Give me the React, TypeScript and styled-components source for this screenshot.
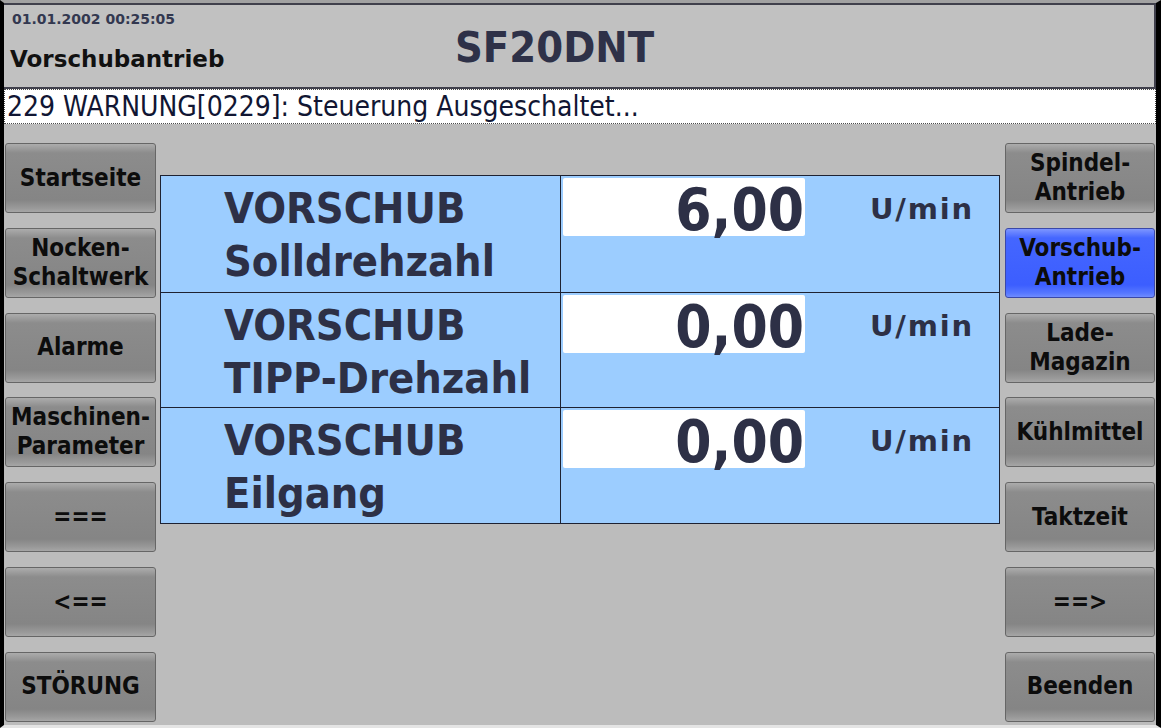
import React from "react";
import styled, { createGlobalStyle } from "styled-components";

const GlobalStyle = createGlobalStyle`
  * { box-sizing: border-box; }
  html, body { margin: 0; padding: 0; background: #bcbcbc; }
  body { font-family: "DejaVu Sans Condensed", "DejaVu Sans", sans-serif; }
`;

const Screen = styled.div`
  width: 1161px;
  height: 728px;
  display: flex;
  flex-direction: column;
  background: #bcbcbc;
  border-left: 4px solid #000;
  border-right: 5px solid #000;
  border-top: 3px solid #a2a2a2;
  border-bottom: 3px solid #e4e4e4;
  overflow: hidden;
`;

const Header = styled.header`
  height: 86px;
  flex: none;
  display: flex;
  background: #c1c1c1;
  border: 2px solid #40404c;
  border-left: none;
  padding-left: 6px;
`;

const HeaderLeft = styled.div`
  width: 445px;
  display: flex;
  flex-direction: column;
  padding-top: 7px;
`;

const DateTime = styled.div`
  font-family: "DejaVu Sans", sans-serif;
  font-weight: bold;
  font-size: 14px;
  line-height: 14px;
  color: #333850;
  padding-left: 2px;
`;

const ScreenName = styled.div`
  font-family: "DejaVu Sans", sans-serif;
  font-weight: bold;
  font-size: 23px;
  line-height: 23px;
  color: #111;
  margin-top: 22px;
`;

const MachineName = styled.h1`
  margin: 0;
  padding-top: 21px;
  font-weight: bold;
  font-size: 43px;
  line-height: 43px;
  color: #2e3148;
`;

const MessageBar = styled.div`
  height: 35px;
  flex: none;
  background: #fff;
  border: 1px dotted #4a4a4a;
  padding-left: 2px;
  font-size: 28px;
  line-height: 33px;
  color: #111633;
  white-space: nowrap;
`;

const Body = styled.main`
  flex: 1;
  display: grid;
  grid-template-columns: 151px 840px 151px;
  column-gap: 4px;
  padding: 19px 0 0 1px;
  & > :last-child { margin-left: 1px; }
`;

const ButtonColumn = styled.nav`
  height: 579px;
  display: flex;
  flex-direction: column;
  justify-content: space-between;
`;

const NavButton = styled.button<{ $active?: boolean }>`
  height: 70px;
  width: 100%;
  padding: 0;
  border: 1px solid ${({ $active }) => ($active ? "#3a48a8" : "#666")};
  border-radius: 3px;
  background: ${({ $active }) =>
    $active
      ? "linear-gradient(to bottom, #7d95ff 0, #4466ff 9px, #3c5eff calc(100% - 12px), #5677ff calc(100% - 4px), #6f8cff 100%)"
      : "linear-gradient(to bottom, #acacac 0, #8c8c8c 9px, #858585 calc(100% - 12px), #999 calc(100% - 4px), #a6a6a6 100%)"};
  font-family: "DejaVu Sans Condensed", "DejaVu Sans", sans-serif;
  font-weight: bold;
  font-size: 24px;
  line-height: 29px;
  color: #0c0c0c;
  text-align: center;
`;

const Table = styled.section`
  margin-top: 32px;
  height: 349px;
  display: grid;
  grid-template-rows: repeat(3, 1fr);
  background: #9ccdff;
  border: 1px solid #1e2232;
`;

const Row = styled.div`
  display: grid;
  grid-template-columns: 400px 1fr;
  & + & { border-top: 1px solid #1e2232; }
`;

const LabelCell = styled.div`
  border-right: 1px solid #1e2232;
  padding: 6px 0 0 63px;
  font-weight: bold;
  font-size: 43px;
  line-height: 53px;
  color: #2d3046;
`;

const ValueCell = styled.div`
  display: flex;
  align-items: flex-start;
  padding: 2px 0 0 2px;
`;

const ValueBox = styled.div`
  width: 242px;
  height: 58px;
  background: #fff;
  border-radius: 2px;
  padding: 6px 1px 0 0;
  text-align: right;
  font-weight: bold;
  font-size: 58px;
  line-height: 52px;
  color: #2d3046;
`;

const Unit = styled.div`
  margin: 16px 0 0 65px;
  font-family: "DejaVu Sans", sans-serif;
  font-weight: bold;
  font-size: 29px;
  line-height: 31px;
  letter-spacing: 1.8px;
  color: #2d3046;
`;

const leftButtons = [
  ["Startseite"],
  ["Nocken-", "Schaltwerk"],
  ["Alarme"],
  ["Maschinen-", "Parameter"],
  ["==="],
  ["<=="],
  ["STÖRUNG"],
];

const rightButtons = [
  ["Spindel-", "Antrieb"],
  ["Vorschub-", "Antrieb"],
  ["Lade-", "Magazin"],
  ["Kühlmittel"],
  ["Taktzeit"],
  ["==>"],
  ["Beenden"],
];

const rows = [
  { title: "VORSCHUB", sub: "Solldrehzahl", value: "6,00" },
  { title: "VORSCHUB", sub: "TIPP-Drehzahl", value: "0,00" },
  { title: "VORSCHUB", sub: "Eilgang", value: "0,00" },
];

const renderLines = (lines: string[]) =>
  lines.map((l, i) => (
    <React.Fragment key={i}>
      {i > 0 && <br />}
      {l}
    </React.Fragment>
  ));

export default function App() {
  return (
    <>
      <GlobalStyle />
      <Screen>
        <Header>
          <HeaderLeft>
            <DateTime>01.01.2002 00:25:05</DateTime>
            <ScreenName>Vorschubantrieb</ScreenName>
          </HeaderLeft>
          <MachineName>SF20DNT</MachineName>
        </Header>

        <MessageBar>229 WARNUNG[0229]: Steuerung Ausgeschaltet...</MessageBar>

        <Body>
          <ButtonColumn>
            {leftButtons.map((b) => (
              <NavButton key={b.join()}>{renderLines(b)}</NavButton>
            ))}
          </ButtonColumn>

          <div>
            <Table>
              {rows.map((r) => (
                <Row key={r.sub}>
                  <LabelCell>
                    {r.title}
                    <br />
                    {r.sub}
                  </LabelCell>
                  <ValueCell>
                    <ValueBox>{r.value}</ValueBox>
                    <Unit>U/min</Unit>
                  </ValueCell>
                </Row>
              ))}
            </Table>
          </div>

          <ButtonColumn>
            {rightButtons.map((b) => (
              <NavButton key={b.join()} $active={b[0] === "Vorschub-"}>
                {renderLines(b)}
              </NavButton>
            ))}
          </ButtonColumn>
        </Body>
      </Screen>
    </>
  );
}
